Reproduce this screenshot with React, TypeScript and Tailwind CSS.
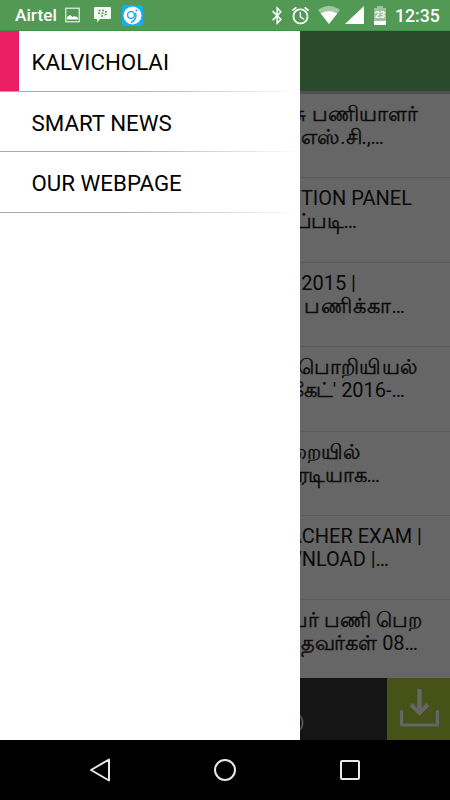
import { FaBluetoothB } from 'react-icons/fa';
import { MdAlarm } from 'react-icons/md';

interface TextLine {
  text: string;
  end: number;
  tracking?: number;
}

const menuItems = ['KALVICHOLAI', 'SMART NEWS', 'OUR WEBPAGE'];

// `end` is the distance from the right edge of the screen to the end of the line
const posts: [TextLine, TextLine][] = [
  [{ text: 'சு பணியாளர்', end: 32, tracking: 0.1 }, { text: 'எஸ்.சி.,…', end: 66, tracking: -0.1 }],
  [{ text: 'TION PANEL', end: 38 }, { text: 'ர்ப்படி…', end: 93, tracking: -0.4 }],
  [{ text: '2015 |', end: 94 }, { text: 'பணிக்கா…', end: 45, tracking: 0.9 }],
  [{ text: 'பொறியியல்', end: 33, tracking: 0.2 }, { text: "கேட்' 2016-…", end: 45, tracking: -0.6 }],
  [{ text: 'றையில்', end: 90, tracking: 0.1 }, { text: 'ரடியாக…', end: 70, tracking: -0.3 }],
  [{ text: 'ACHER EXAM |', end: 28 }, { text: 'WNLOAD |…', end: 61 }],
  [{ text: 'பர் பணி பெற', end: 28, tracking: 0 }, { text: 'தவர்கள் 08…', end: 32, tracking: -0.1 }],
];

const tamilRun = /([\u0b80-\u0bff]+)/;

function StatusBar() {
  return (
    <header className="flex h-[31px] shrink-0 items-center border-b border-[#3f9143] bg-[#529955] text-white">
      <span className="ml-[15px] w-[43px] pt-0.5 text-[17.3px] leading-none font-medium">Airtel</span>
      <svg className="ml-[7px] h-4 w-[15px]" viewBox="0 0 15 16" fill="none">
        <rect x="0.75" y="1.25" width="13.5" height="13.5" stroke="#dcebdd" strokeWidth="1.3" />
        <path d="M2 12.5V10l3-2 2.5 2 2-1 3.5 1.500v2Z" fill="#fff" />
      </svg>
      <svg className="ml-[14px] h-4 w-[17px]" viewBox="0 0 17 16">
        <path d="M1 0h15q1 0 1 1v10q0 1-1 1H6l-3 3.5V12H1q-1 0-1-1V1q0-1 1-1Z" fill="#f4faf4" />
        <path
          d="M4.5 3.5h2M8 3.5h2M4 6.2h2M7.5 6.2h2M11 4.8h2M7 9h2M10.5 7.5h2"
          stroke="#529955"
          strokeWidth="1.6"
        />
      </svg>
      <svg className="ml-[11px] h-[21px] w-[21px]" viewBox="0 0 21 21">
        <rect width="21" height="21" rx="3" fill="#16aeee" />
        <circle cx="10.5" cy="10.5" r="9" fill="#fff" />
        <circle cx="9" cy="10" r="3.4" fill="none" stroke="#16aeee" strokeWidth="1.3" />
        <path d="M13.5 8c1.5 4-.5 8-4.5 9.5" fill="none" stroke="#16aeee" strokeWidth="1.5" />
        <circle cx="14.5" cy="5.5" r="1.1" fill="#16aeee" />
      </svg>
      <FaBluetoothB className="ml-[127px] h-[19px] w-[14px]" />
      <MdAlarm className="ml-[6px] size-[21px]" />
      <svg className="ml-[7px] h-[18px] w-[22px]" viewBox="0 0 22 18">
        <path d="M0 4Q11-4 22 4L11 18Z" fill="#a0c8a2" />
        <path d="M2.8 7.5Q11 2.5 19.2 7.5L11 18Z" fill="#fff" />
      </svg>
      <svg className="ml-[5px] h-[18px] w-[19px]" viewBox="0 0 19 18">
        <path d="M19 0v18H0Z" fill="#fff" />
      </svg>
      <svg className="ml-[10px] h-[19px] w-3" viewBox="0 0 12 19">
        <path d="M3 0h6v2h3v17H0V2h3Z" fill="#9bc49d" />
        <path d="M0 15h12v4H0Z" fill="#fff" />
        <text x="6" y="12" textAnchor="middle" fontFamily="Roboto" fontSize="9" fontWeight="700" fill="#fff">
          23
        </text>
      </svg>
      <span className="ml-[9px] pt-[3px] text-[17.7px] leading-none font-medium">12:35</span>
    </header>
  );
}

function Drawer() {
  return (
    <nav className="w-[300px] shrink-0 bg-white">
      {menuItems.map((item, index) => (
        <div key={item}>
          <div className="flex h-[59.7px]">
            <span className={index === 0 ? 'w-[18.5px] bg-[#e91e63]' : 'w-[18.5px]'} />
            <span className="ml-[13px] self-center pt-[2.5px] text-[22.3px] leading-none text-black">{item}</span>
          </div>
          <div className="h-px bg-linear-to-r from-[#aaa] from-40% to-white" />
        </div>
      ))}
    </nav>
  );
}

function PostLine({ text, end, tracking }: TextLine) {
  return (
    <p className="h-[23px]" style={{ marginRight: end }}>
      {text.split(tamilRun).map((run, index) =>
        tamilRun.test(run) ? (
          <span
            key={index}
            className="text-[20.5px] leading-none [-webkit-text-stroke:0.45px_#0a0a0a]"
            style={{ letterSpacing: tracking }}
          >
            {run}
          </span>
        ) : (
          run
        ),
      )}
    </p>
  );
}

function PostList() {
  return (
    <main className="flex min-w-0 flex-1 flex-col overflow-hidden bg-[#666]">
      <div className="h-[60px] shrink-0 bg-[#2b4a2c]" />
      <div className="h-[3px] shrink-0 bg-[#505050]" />
      <div className="flex-1 overflow-hidden">
        {posts.map((lines, index) => (
          <div
            key={index}
            className="flex h-[84.4px] flex-col items-end border-b border-[#5b5b5b] pt-[9px] text-[20px] leading-[23px] whitespace-nowrap text-[#0a0a0a]"
          >
            {lines.map((line) => (
              <PostLine key={line.text} {...line} />
            ))}
          </div>
        ))}
      </div>
      <div className="flex h-[62px] shrink-0 bg-[#151515]">
        <span className="mt-[37px] -ml-px flex-1 text-[15px] leading-none text-[#666]">)</span>
        <div className="w-[63px] bg-[#465218]">
          <svg
            className="mt-[10px] ml-[13px] h-10 w-[39px]"
            viewBox="0 0 39 40"
            fill="none"
            stroke="#666"
            strokeLinejoin="round"
          >
            <path d="M1.6 23.5v13.5h35.8V23.5" strokeWidth="3.2" strokeLinecap="round" />
            <path d="M19.5 1v20" strokeWidth="4.4" />
            <path d="M11 16.5l8.5 8.5 8.5-8.5" strokeWidth="4" strokeLinejoin="miter" />
          </svg>
        </div>
      </div>
    </main>
  );
}

function NavigationBar() {
  return (
    <footer className="flex h-[60px] shrink-0 items-center bg-black">
      <svg className="ml-[89px] h-6 w-[22px]" viewBox="0 0 22 24" fill="none" stroke="#e8e8e8" strokeWidth="2">
        <path d="M20 1.5v21L2 12Z" strokeLinejoin="round" />
      </svg>
      <svg className="ml-[103px] size-[22px]" viewBox="0 0 22 22" fill="none" stroke="#e8e8e8" strokeWidth="2">
        <circle cx="11" cy="11" r="10" />
      </svg>
      <span className="ml-[104px] size-5 rounded-[2px] border-2 border-[#e8e8e8]" />
    </footer>
  );
}

export default function App() {
  return (
    <div className="flex h-[800px] w-[450px] flex-col overflow-hidden bg-black font-[Roboto,'Noto_Sans',sans-serif]">
      <StatusBar />
      <div className="flex min-h-0 flex-1">
        <Drawer />
        <PostList />
      </div>
      <NavigationBar />
    </div>
  );
}
